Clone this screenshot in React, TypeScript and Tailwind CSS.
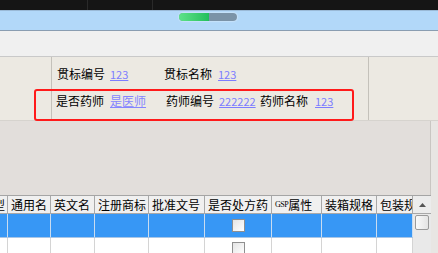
import React from "react";

const cols = [
  { w: 43, t: "通用名" },
  { w: 44, t: "英文名" },
  { w: 54, t: "注册商标" },
  { w: 56, t: "批准文号" },
  { w: 67, t: "是否处方药", check: true },
  { w: 50, t: "GSP", gsp: true },
  { w: 55, t: "装箱规格" },
  { w: 36, t: "包装规格" },
];

function Check() {
  return (
    <div className="w-[13px] h-[13px] border border-[#8f8f8f] bg-gradient-to-br from-[#e4e4e4] to-[#ffffff]" />
  );
}

export default function App() {
  return (
    <div className="relative w-[438px] h-[253px] overflow-hidden bg-[#ece9e3] font-['Noto_Sans_CJK_SC','Noto_Sans',sans-serif] text-[12px] text-black leading-none">
      {/* black top bar */}
      <div className="flex h-[10px] bg-[#151515]">
        <div className="w-[88px] border-r border-[#2a2a2a]" />
        <div className="w-[65px] border-r border-[#2a2a2a]" />
      </div>
      {/* blue bar */}
      <div className="flex items-start h-[20px] bg-[#b2d8f9] border-t border-[#9ab9d6] pl-[179px] pt-[2px]">
        <div className="flex w-[58px] h-[8px] rounded-full overflow-hidden bg-[#7b93a8] shadow-[0_0_2px_rgba(255,255,255,0.9)]">
          <div className="w-[30px] h-full bg-gradient-to-r from-[#5de28a] to-[#1fbf5c]" />
        </div>
      </div>
      <div className="h-px bg-[#8a9db1]" />
      {/* toolbar */}
      <div className="h-[25px] bg-[#f0f0f0]" />
      <div className="h-px bg-[#c9c9c9]" />
      {/* info panel */}
      <div className="flex h-[63px] bg-[#ece9e2]">
        <div className="w-[52px] border-r border-[#c4c1ba]" />
        <div className="w-[317px] border-r border-[#c4c1ba] pt-[10px] pl-[4px] flex flex-col gap-[13px]">
          <div className="flex items-center h-[14px]">
            <div className="w-[108px] flex items-center">
              <span className="ml-[1px]">贯标编号</span>
              <span className="ml-[5px] text-[11px] text-[#7d7dff] underline">123</span>
            </div>
            <div className="flex items-center">
              <span>贯标名称</span>
              <span className="ml-[6px] text-[11px] text-[#7d7dff] underline">123</span>
            </div>
          </div>
          <div className="flex items-center h-[14px]">
            <div className="w-[110px] flex items-center">
              <span>是否药师</span>
              <span className="ml-[6px] text-[#8585ff] underline">是医师</span>
            </div>
            <div className="w-[94px] flex items-center">
              <span>药师编号</span>
              <span className="ml-[5px] text-[11px] text-[#7d7dff] underline">222222</span>
            </div>
            <div className="flex items-center">
              <span>药师名称</span>
              <span className="ml-[7px] text-[11px] text-[#7d7dff] underline">123</span>
            </div>
          </div>
        </div>
        <div className="flex-1" />
      </div>
      {/* gray area */}
      <div className="flex h-[75px] bg-[#e8e6e3] border-t border-[#d6d3ce]">
        <div className="w-[431px] bg-[#e2dedb] border-r border-[#c9c6c2]" />
        <div className="flex-1" />
      </div>
      {/* table */}
      <div className="flex bg-[#e8e6e3]">
        <div className="w-[431px] flex flex-col border-t border-[#a5a5a5]">
          {/* header */}
          <div className="flex h-[18px] bg-[#f0f0f0] border-b border-[#a8a8a8]">
            <div className="w-[8px] shrink-0 overflow-hidden border-r border-[#a8a8a8] flex items-center">
              <span className="ml-[-7px]">型</span>
            </div>
            {cols.map((c, i) => (
              <div
                key={i}
                style={{ width: c.w }}
                className="shrink-0 overflow-hidden whitespace-nowrap border-r border-[#a8a8a8] flex items-center pl-[3px]"
              >
                {c.gsp ? (
                  <span className="flex items-center">
                    <span className="text-[8px] font-['Liberation_Serif',serif] tracking-[-0.5px]">GSP</span>
                    <span>属性</span>
                  </span>
                ) : (
                  <span>{c.t}</span>
                )}
              </div>
            ))}
            <div className="w-[18px] shrink-0 bg-[#ececec] flex items-center justify-center">
              <svg width="7" height="4" viewBox="0 0 7 4" className="block">
                <path d="M3.5 0 L7 4 L0 4 Z" fill="#555555" />
              </svg>
            </div>
          </div>
          {/* rows */}
          <div className="flex">
            <div className="flex flex-col">
              <div className="flex h-[24px] bg-[#3797f5] border-b border-[#a9c6e6]">
                <div className="w-[8px] border-r border-[#c9dcf0]" />
                {cols.map((c, i) => (
                  <div
                    key={i}
                    style={{ width: c.w }}
                    className="shrink-0 border-r border-[#c9dcf0] flex items-center justify-center"
                  >
                    {c.check ? <Check /> : null}
                  </div>
                ))}
              </div>
              <div className="flex h-[16px] bg-white">
                <div className="w-[8px] border-r border-[#d4d4d4]" />
                {cols.map((c, i) => (
                  <div
                    key={i}
                    style={{ width: c.w }}
                    className="shrink-0 border-r border-[#d4d4d4] flex justify-center pt-[4px]"
                  >
                    {c.check ? <Check /> : null}
                  </div>
                ))}
              </div>
            </div>
            {/* scrollbar */}
            <div className="flex-1 bg-[#e9e9e9] flex justify-center pt-[1px]">
              <div className="w-[14px] h-[15px] rounded-[2px] border border-[#9a9a9a] bg-gradient-to-r from-[#fafafa] to-[#e4e4e4]" />
            </div>
          </div>
        </div>
        <div className="flex-1" />
      </div>
      {/* red annotation box */}
      <div className="absolute left-[34px] top-[89px] w-[320px] h-[32px] border-2 border-[#ff1a1a] rounded-[3px]" />
    </div>
  );
}
